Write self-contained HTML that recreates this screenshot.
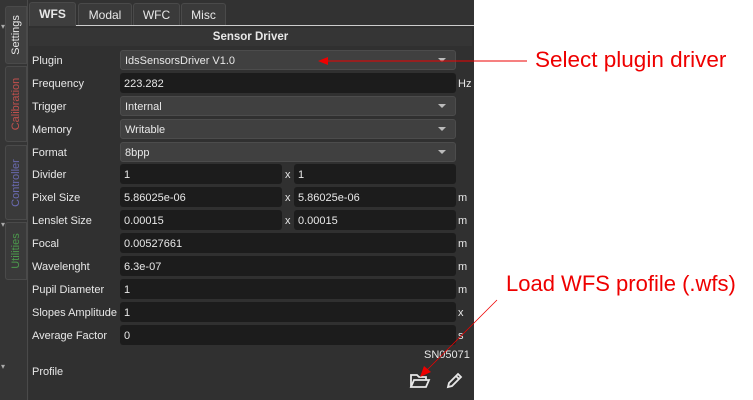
<!DOCTYPE html>
<html><head><style>
*{margin:0;padding:0;box-sizing:border-box}
body{width:753px;height:400px;background:#fff;position:relative;overflow:hidden;font-family:"Liberation Sans",sans-serif;font-size:11px;color:#e8e8e8}
.dark{position:absolute;left:0;top:0;width:474px;height:400px;background:#323232}
.strip{position:absolute;left:0;top:0;width:28px;height:400px;background:#353535;border-right:1px solid #4a4a4a}
.vt{position:absolute;left:5px;width:22px;background:#3a3a3a;border:1px solid #4a4a4a;border-radius:3px 0 0 3px}
.vt span{position:absolute;left:50%;top:50%;transform:translate(-50%,-50%) rotate(-90deg);white-space:nowrap;font-size:11px}
.tab{position:absolute;top:3px;height:22px;background:#3a3a3a;border:1px solid #4a4a4a;border-bottom:none;border-radius:3px 3px 0 0;text-align:center;line-height:22px;font-size:12px}
.topline{position:absolute;left:76px;top:25px;width:398px;height:1px;background:#ccc}
.panel{position:absolute;left:29px;top:26px;width:445px;height:374px;background:#303030}
.hdr{position:absolute;left:29px;top:28px;width:443px;height:18px;background:#353535;text-align:center;font-weight:bold;line-height:18px;font-size:11.5px}
.lbl{position:absolute;left:32px;font-size:11px;margin-top:2px}
.f{position:absolute;height:20px;border-radius:3px;background:#1c1c1c;line-height:17px;padding-top:3px;padding-left:4px}
.c{background:#404040;border:1px solid #4c4c4c;line-height:16px;padding-top:2px}
.c:after{content:"";position:absolute;right:9px;top:7px;border-left:4px solid transparent;border-right:4px solid transparent;border-top:4px solid #bbb}
.u{position:absolute;left:458px;font-size:11px;margin-top:2px}
.ann{position:absolute;color:#e00;font-size:22.5px;font-family:"Liberation Sans",sans-serif}
</style></head><body>
<div class="dark"></div>
<div class="strip"></div>
<div class="vt" style="top:6px;height:58px;background:#404040"><span>Settings</span></div>
<div class="vt" style="top:66px;height:76px"><span style="color:#c0504d">Calibration</span></div>
<div class="vt" style="top:145px;height:75px"><span style="color:#6a6ab0">Controller</span></div>
<div class="vt" style="top:222px;height:58px"><span style="color:#4c9a4c">Utilities</span></div>
<div style="position:absolute;left:1px;top:22px;font-size:8px;color:#aaa">▾</div>
<div style="position:absolute;left:1px;top:220px;font-size:8px;color:#aaa">▾</div>
<div style="position:absolute;left:1px;top:362px;font-size:8px;color:#aaa">▾</div>
<div class="panel"></div>
<div class="tab" style="left:29px;width:47px;top:2px;height:24px;background:#3e3e3e;font-weight:bold">WFS</div>
<div class="tab" style="left:78px;width:54px">Modal</div>
<div class="tab" style="left:133px;width:47px">WFC</div>
<div class="tab" style="left:181px;width:45px">Misc</div>
<div class="topline"></div>
<div class="hdr">Sensor Driver</div>

<div class="lbl" style="top:53px">Plugin</div><div class="f c" style="left:120px;top:50px;width:336px">IdsSensorsDriver V1.0</div>
<div class="lbl" style="top:76px">Frequency</div><div class="f" style="left:120px;top:73px;width:336px">223.282</div><div class="u" style="top:76px">Hz</div>
<div class="lbl" style="top:99px">Trigger</div><div class="f c" style="left:120px;top:96px;width:336px">Internal</div>
<div class="lbl" style="top:122px">Memory</div><div class="f c" style="left:120px;top:119px;width:336px">Writable</div>
<div class="lbl" style="top:145px">Format</div><div class="f c" style="left:120px;top:142px;width:336px">8bpp</div>
<div class="lbl" style="top:167px">Divider</div><div class="f" style="left:120px;top:164px;width:162px">1</div><div style="position:absolute;left:285px;top:169px">x</div><div class="f" style="left:294px;top:164px;width:162px">1</div>
<div class="lbl" style="top:190px">Pixel Size</div><div class="f" style="left:120px;top:187px;width:162px">5.86025e-06</div><div style="position:absolute;left:285px;top:192px">x</div><div class="f" style="left:294px;top:187px;width:162px">5.86025e-06</div><div class="u" style="top:190px">m</div>
<div class="lbl" style="top:213px">Lenslet Size</div><div class="f" style="left:120px;top:210px;width:162px">0.00015</div><div style="position:absolute;left:285px;top:215px">x</div><div class="f" style="left:294px;top:210px;width:162px">0.00015</div><div class="u" style="top:213px">m</div>
<div class="lbl" style="top:236px">Focal</div><div class="f" style="left:120px;top:233px;width:336px">0.00527661</div><div class="u" style="top:236px">m</div>
<div class="lbl" style="top:259px">Wavelenght</div><div class="f" style="left:120px;top:256px;width:336px">6.3e-07</div><div class="u" style="top:259px">m</div>
<div class="lbl" style="top:282px">Pupil Diameter</div><div class="f" style="left:120px;top:279px;width:336px">1</div><div class="u" style="top:282px">m</div>
<div class="lbl" style="top:305px">Slopes Amplitude</div><div class="f" style="left:120px;top:302px;width:336px">1</div><div class="u" style="top:305px">x</div>
<div class="lbl" style="top:328px">Average Factor</div><div class="f" style="left:120px;top:325px;width:336px">0</div><div class="u" style="top:328px">s</div>
<div style="position:absolute;left:424px;top:349px">SN05071</div>
<div class="lbl" style="top:364px">Profile</div>
<svg style="position:absolute;left:409px;top:372px" width="22" height="18" viewBox="0 0 22 18" fill="none" stroke="#e8e8e8" stroke-width="1.8"><path d="M2 15V3h6l2 2h7v3"/><path d="M2 15l3-7h15l-3 7z"/></svg>
<svg style="position:absolute;left:445px;top:372px" width="18" height="18" viewBox="0 0 18 18" fill="none" stroke="#e8e8e8" stroke-width="1.8"><path d="M3 15l1-4 9-9 3 3-9 9z M11 4l3 3"/></svg>

<svg style="position:absolute;left:0;top:0" width="753" height="400">
<line x1="527" y1="61" x2="325" y2="61" stroke="#e00" stroke-width="1"/>
<polygon points="318,61 328,57 328,65" fill="#e00"/>
<line x1="497" y1="300" x2="425" y2="372" stroke="#e00" stroke-width="0.8"/>
<polygon points="420,377 424,366 431,372" fill="#e00"/>
</svg>
<div class="ann" style="left:535px;top:47px">Select plugin driver</div>
<div class="ann" style="left:506px;top:271px;font-size:22px">Load WFS profile (.wfs)</div>
</body></html>
